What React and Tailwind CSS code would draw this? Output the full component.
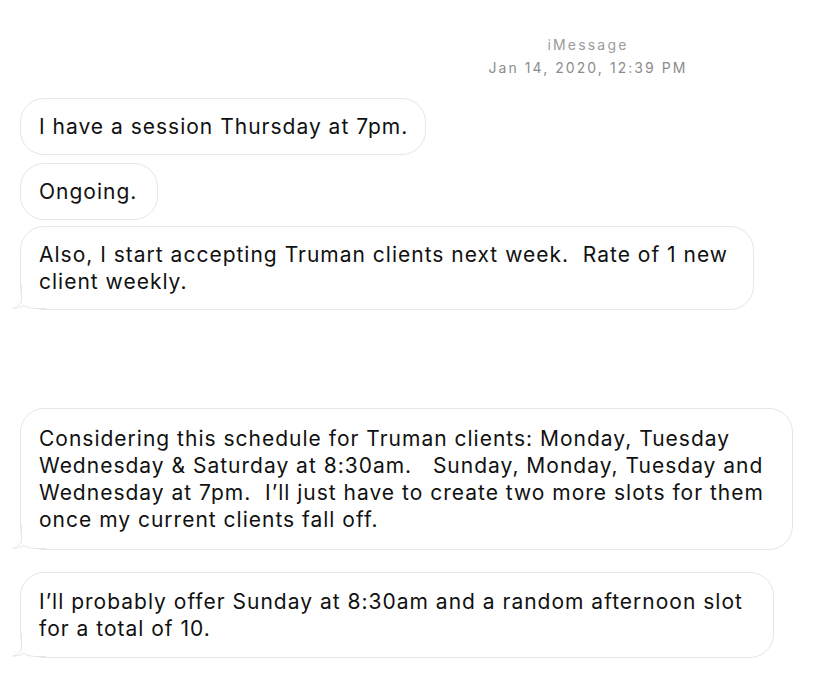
import React from 'react';

const messages = [
  { id: 1, lines: ['I have a session Thursday at 7pm.'], tail: false, width: 'w-[406px]', gap: 'mt-0', pad: 'py-[14px]' },
  { id: 2, lines: ['Ongoing.'], tail: false, width: 'w-[138px]', gap: 'mt-[8px]', pad: 'py-[14px]' },
  {
    id: 3,
    lines: ['Also, I start accepting Truman clients next week.  Rate of 1 new', 'client weekly.'],
    tail: true,
    width: 'w-[734px]',
    gap: 'mt-[6px]',
    pad: 'py-[14px]',
  },
  {
    id: 4,
    lines: [
      'Considering this schedule for Truman clients: Monday, Tuesday',
      'Wednesday & Saturday at 8:30am.   Sunday, Monday, Tuesday and',
      'Wednesday at 7pm.  I\u2019ll just have to create two more slots for them',
      'once my current clients fall off.',
    ],
    tail: true,
    width: 'w-[773px]',
    gap: 'mt-[98px]',
    pad: 'py-[16px]',
  },
  {
    id: 5,
    lines: ['I\u2019ll probably offer Sunday at 8:30am and a random afternoon slot', 'for a total of 10.'],
    tail: true,
    width: 'w-[754px]',
    gap: 'mt-[22px]',
    pad: 'py-[15px]',
  },
];

// little curled tail at the bottom-left of a bubble
const Tail = () => (
  <svg
    className="absolute left-[-11px] bottom-0"
    width="36"
    height="24"
    viewBox="0 0 36 24"
    fill="none"
  >
    <path d="M11.5 0 L11.5 15 Q11.5 20.5 2.5 23.3 Q10 23 14 20.5 Q18 23.5 26 23.5 L36 23.5 L36 0 Z" fill="#ffffff" />
    <path
      d="M11.5 0 L11.5 15 Q11.5 20.5 2.5 23.3 Q10 23 14 20.5 Q18 23.5 26 23.5 L36 23.5"
      stroke="#e6e6e6"
      strokeWidth="1"
    />
  </svg>
);

const Bubble = ({ msg }) => (
  <div
    className={`relative ${msg.gap} ${msg.width} ${msg.pad} rounded-[24px] border border-[#e6e6e6] bg-white px-[18px]`}
  >
    {msg.tail && <Tail />}
    <p className="relative whitespace-pre text-[21px] leading-[27px] tracking-[1px] text-[#111111]">
      {msg.lines.map((line, i) => (
        <React.Fragment key={i}>
          {line}
          {i < msg.lines.length - 1 && <br />}
        </React.Fragment>
      ))}
    </p>
  </div>
);

export default function App() {
  return (
    <div className="min-h-[684px] w-[840px] bg-white font-['Inter','Liberation_Sans',sans-serif]">
      {/* Header */}
      <div className="ml-[478px] w-[220px] pt-[35px] text-center">
        <div className="text-[14px] leading-[20px] tracking-[2.2px] text-[#9b9b9b]">iMessage</div>
        <div className="mt-[3px] text-[14px] leading-[20px] tracking-[2.05px] text-[#8c8c8c]">
          Jan 14, 2020, 12:39 PM
        </div>
      </div>

      {/* Messages */}
      <div className="mt-[20px] flex flex-col items-start pl-[20px]">
        {messages.map((msg) => (
          <Bubble key={msg.id} msg={msg} />
        ))}
      </div>
    </div>
  );
}
